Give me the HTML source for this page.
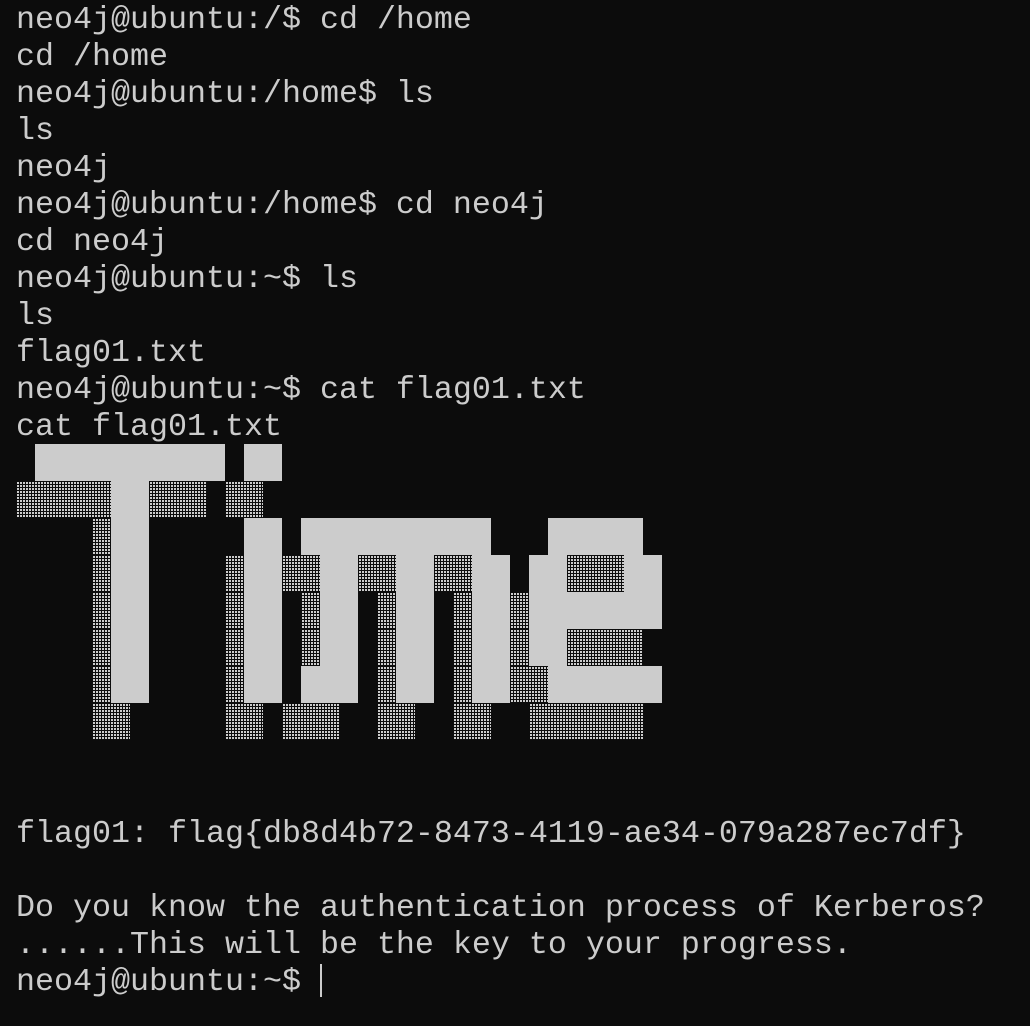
<!DOCTYPE html>
<html><head><meta charset="utf-8"><style>
html,body{margin:0;padding:0;background:#0c0c0c;width:1030px;height:1026px;overflow:hidden}
pre{position:absolute;left:16px;top:2px;margin:0;font-family:"Liberation Mono",monospace;font-size:31.67px;line-height:37px;color:#cccccc;white-space:pre}
.s,.d{position:absolute;height:37px}
.s{background:#cccccc}
.d{background-image:linear-gradient(90deg,#0c0c0c 1px,transparent 1px),linear-gradient(#0c0c0c 1px,#cccccc 1px);background-size:3px 3px}
.cur{position:absolute;left:320px;top:964px;width:2px;height:33px;background:#cccccc}
</style></head><body>
<pre>neo4j@ubuntu:/$ cd /home
cd /home
neo4j@ubuntu:/home$ ls
ls
neo4j
neo4j@ubuntu:/home$ cd neo4j
cd neo4j
neo4j@ubuntu:~$ ls
ls
flag01.txt
neo4j@ubuntu:~$ cat flag01.txt
cat flag01.txt










flag01: flag{db8d4b72-8473-4119-ae34-079a287ec7df}

Do you know the authentication process of Kerberos?
......This will be the key to your progress.
neo4j@ubuntu:~$ </pre>
<div class="cur"></div>
<div id="art"></div>
<script>
var R=[
[["s",1,10],["s",12,13]],
[["d",0,4],["s",5,6],["d",7,9],["d",11,12]],
[["d",4,4],["s",5,6],["s",12,13],["s",15,24],["s",28,32]],
[["d",4,4],["s",5,6],["d",11,11],["s",12,13],["d",14,15],["s",16,17],["d",18,19],["s",20,21],["d",22,23],["s",24,25],["s",27,28],["d",29,31],["s",32,33]],
[["d",4,4],["s",5,6],["d",11,11],["s",12,13],["d",15,15],["s",16,17],["d",19,19],["s",20,21],["d",23,23],["s",24,25],["d",26,26],["s",27,33]],
[["d",4,4],["s",5,6],["d",11,11],["s",12,13],["d",15,15],["s",16,17],["d",19,19],["s",20,21],["d",23,23],["s",24,25],["d",26,26],["s",27,28],["d",29,32]],
[["d",4,4],["s",5,6],["d",11,11],["s",12,13],["s",15,17],["d",19,19],["s",20,21],["d",23,23],["s",24,25],["d",26,27],["s",28,33]],
[["d",4,5],["d",11,12],["d",14,16],["d",19,20],["d",23,24],["d",27,32]]
];
var h="";
R.forEach(function(row,r){row.forEach(function(b){
h+='<div class="'+b[0]+'" style="left:'+(16+19*b[1])+'px;top:'+(444+37*r)+'px;width:'+(19*(b[2]-b[1]+1))+'px"></div>';
});});
document.getElementById("art").innerHTML=h;
</script>
</body></html>
